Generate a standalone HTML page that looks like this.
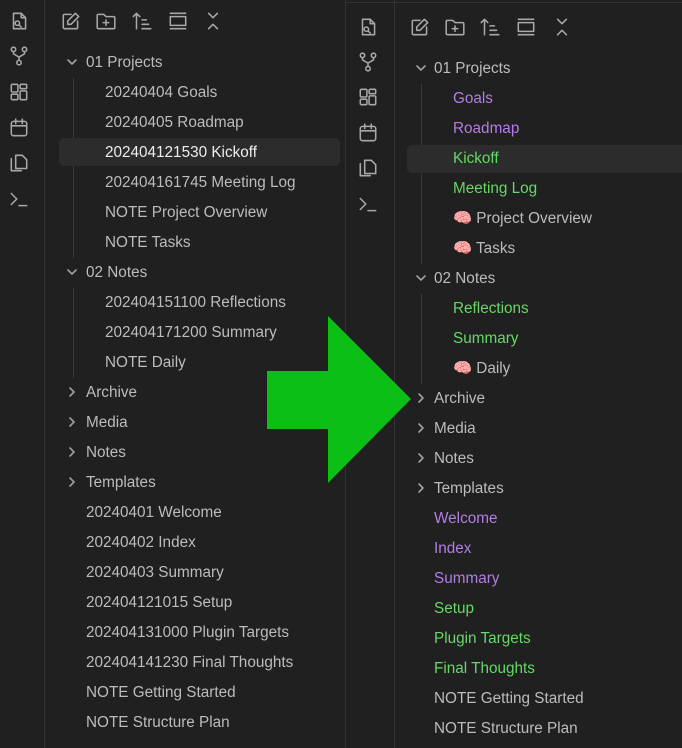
<!DOCTYPE html><html><head><style>
*{margin:0;padding:0;box-sizing:border-box}
body{width:682px;height:748px;background:#202020;position:relative;overflow:hidden;font-family:"Liberation Sans",sans-serif;font-size:15.3px;color:#bcbcbc}
.v{position:absolute;top:0;bottom:0;width:1px;background:#333}
.t{position:absolute;white-space:nowrap;line-height:18px}
.p{color:#b27ee4}.g{color:#65d965}
.hl{position:absolute;background:#2c2c2c;border-radius:5px}
svg.i{position:absolute;width:22px;height:22px;fill:none;stroke:#a8a8a8;stroke-width:1.4;stroke-linecap:round;stroke-linejoin:round}
.ch{position:absolute;width:14px;height:14px;fill:none;stroke:#a0a0a0;stroke-width:1.6;stroke-linecap:round;stroke-linejoin:round}
</style></head><body>
<div class="v" style="left:44px"></div>
<div class="v" style="left:345px"></div>
<div class="v" style="left:394px"></div>
<div style="position:absolute;left:345px;right:0;top:2px;height:1px;background:#333"></div>
<div style="position:absolute;left:73px;top:78px;width:1px;height:180px;background:#3a3a3a"></div>
<div style="position:absolute;left:73px;top:288px;width:1px;height:90px;background:#3a3a3a"></div>
<div style="position:absolute;left:421px;top:84px;width:1px;height:180px;background:#3a3a3a"></div>
<div style="position:absolute;left:421px;top:294px;width:1px;height:90px;background:#3a3a3a"></div>
<div class="hl" style="left:59px;top:138px;width:281px;height:28px"></div>
<div class="hl" style="left:407px;top:145px;width:280px;height:28px"></div>
<div id="c"></div>
<svg style="position:absolute;left:0;top:0" width="682" height="748"><polygon points="267,371 328,371 328,316 411,399 328,483 328,429 267,429" fill="#0cbf16"/></svg>
<script>
var h='';
function ic(x,y){var s=[
'<path d="M5 3h7l4 4v10H5z M12 3v4h4"/><circle cx="8.5" cy="12" r="2"/><path d="M10 13.5l2 2"/>',
'<circle cx="5" cy="4" r="2"/><circle cx="15" cy="4" r="2"/><circle cx="10" cy="16" r="2"/><path d="M5 6v2l5 3l5-3V6M10 11v3"/>',
'<rect x="3" y="3" width="6" height="7" rx="1"/><rect x="11" y="3" width="6" height="4" rx="1"/><rect x="3" y="12" width="6" height="5" rx="1"/><rect x="11" y="9" width="6" height="8" rx="1"/>',
'<rect x="3" y="4" width="14" height="13" rx="2"/><path d="M3 8h14M7 2v4M13 2v4"/>',
'<path d="M7 3h6l4 4v8H7z M3 6v11h9"/>',
'<path d="M3 5l5 5l-5 5M10 16h7"/>'];
for(var k=0;k<6;k++)h+='<svg class="i" viewBox="0 0 20 20" style="left:'+(x-11)+'px;top:'+(y[k]-11)+'px">'+s[k]+'</svg>';}
ic(19,[21,56,92,128,163,199]);ic(368,[27,62,97,133,168,204]);
function tb(xs,y){var s=[
'<path d="M16 10v6a1 1 0 0 1-1 1H4a1 1 0 0 1-1-1V5a1 1 0 0 1 1-1h6M14 3l3 3l-7 7H7v-3z"/>',
'<path d="M2 5a1 1 0 0 1 1-1h5l2 2h7a1 1 0 0 1 1 1v9a1 1 0 0 1-1 1H3a1 1 0 0 1-1-1z M10 9v5M7.5 11.5h5"/>',
'<path d="M5 17V3M2 6l3-3l3 3M10 9h4M10 13h6M10 17h8"/>',
'<path d="M3 3h14M3 17h14"/><rect x="3" y="6" width="14" height="8"/>',
'<path d="M6 3l4 4l4-4M6 17l4-4l4 4"/>'];
for(var k=0;k<5;k++)h+='<svg class="i" viewBox="0 0 20 20" style="left:'+(xs[k]-11)+'px;top:'+(y-11)+'px">'+s[k]+'</svg>';}
tb([71,106,142,178,213],21);tb([420,455,490,526,562],27);
function ch(x,y,o){h+='<svg class="ch" viewBox="0 0 14 14" style="left:'+(x-7)+'px;top:'+(y-7)+'px"><path d="'+(o?'M3 5l4 4l4-4':'M5 3l4 4l-4 4')+'"/></svg>';}
function t(x,y,s,c){h+='<div class="t '+(c||'')+'" style="left:'+x+'px;top:'+(y-8)+'px">'+s+'</div>';}
var L=[[0,'01 Projects',1],[1,'20240404 Goals'],[1,'20240405 Roadmap'],[1,'202404121530 Kickoff','','#eee'],[1,'202404161745 Meeting Log'],[1,'NOTE Project Overview'],[1,'NOTE Tasks'],[0,'02 Notes',1],[1,'202404151100 Reflections'],[1,'202404171200 Summary'],[1,'NOTE Daily'],[0,'Archive',0],[0,'Media',0],[0,'Notes',0],[0,'Templates',0],[2,'20240401 Welcome'],[2,'20240402 Index'],[2,'20240403 Summary'],[2,'202404121015 Setup'],[2,'202404131000 Plugin Targets'],[2,'202404141230 Final Thoughts'],[2,'NOTE Getting Started'],[2,'NOTE Structure Plan']];
L.forEach(function(r,i){var y=62+i*30;if(r[0]==0){ch(72,y,r[2]);t(86,y,r[1]);}else if(r[0]==1){h+='<div class="t" style="left:105px;top:'+(y-8)+'px;'+(r[3]?'color:'+r[3]:'')+'">'+r[1]+'</div>';}else t(86,y,r[1]);});
var R=[[0,'01 Projects',1],[1,'Goals','p'],[1,'Roadmap','p'],[1,'Kickoff','g'],[1,'Meeting Log','g'],[1,'🧠 Project Overview'],[1,'🧠 Tasks'],[0,'02 Notes',1],[1,'Reflections','g'],[1,'Summary','g'],[1,'🧠 Daily'],[0,'Archive',0],[0,'Media',0],[0,'Notes',0],[0,'Templates',0],[2,'Welcome','p'],[2,'Index','p'],[2,'Summary','p'],[2,'Setup','g'],[2,'Plugin Targets','g'],[2,'Final Thoughts','g'],[2,'NOTE Getting Started'],[2,'NOTE Structure Plan']];
R.forEach(function(r,i){var y=68+i*30;if(r[0]==0){ch(421,y,r[2]);t(434,y,r[1]);}else if(r[0]==1)t(453,y,r[1],r[2]);else t(434,y,r[1],r[2]);});
document.getElementById('c').innerHTML=h;
</script>
</body></html>
